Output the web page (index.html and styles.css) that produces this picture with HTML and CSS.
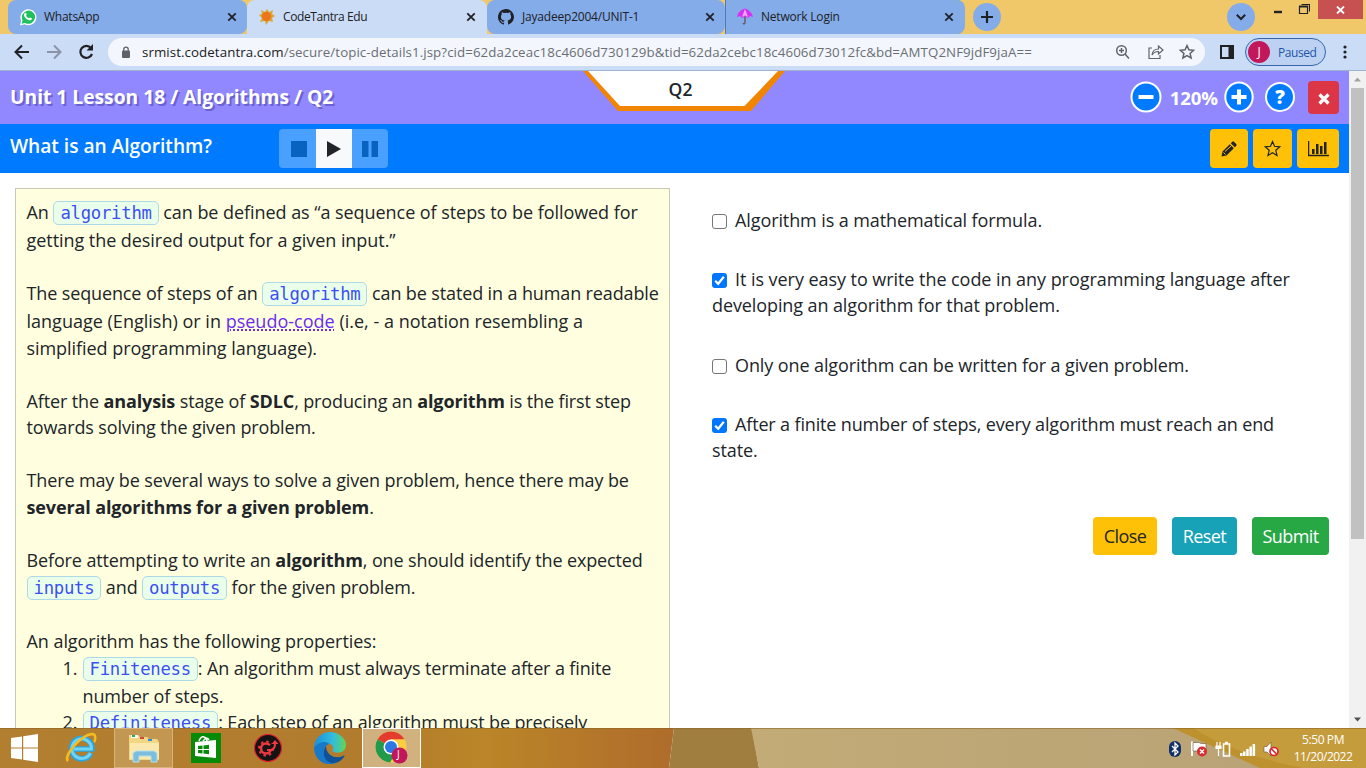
FILE: index.html
```html
<!DOCTYPE html>
<html lang="en">
<head>
<meta charset="utf-8">
<title>CodeTantra Edu</title>
<link rel="stylesheet" href="styles.css">
</head>
<body>
<div class="tabstrip">
  <div class="tab first">
    <svg class="fav" width="18" height="18" viewBox="0 0 18 18"><path d="M1 17.500l1.200-4.800A8 8 0 1 1 5.500 16.200z" fill="#fff"/><path d="M2.600 15.800l1-3.600A6.600 6.600 0 1 1 6.200 14.900z" fill="#20c05c"/><path d="M5.600 5.200c.5-.7 1.200-.6 1.500 0l.6 1.400c.1.400-.6.900-.6 1.200.6 1.200 1.600 2 2.900 2.500.4 0 .8-1 1.200-.9l1.500.8c.4.300.1 1.300-.4 1.700-2.400 1.500-7.500-2.100-7.300-5.200z" fill="#fff"/></svg>
    <span class="tt">WhatsApp</span><svg class="x" width="10" height="10" viewBox="0 0 10 10"><path d="M1.300 1.300l7.400 7.400M8.700 1.300L1.300 8.700"/></svg>
  </div>
  <div class="tab active">
    <svg class="fav" width="18" height="18" viewBox="0 0 18 18"><path d="M9 1l2 3 4-2-1 4 3 2-3 2 1 4-4-1-3 4-1-4-5 1 2-4-3-3 3-1-1-4 4 2z" fill="#d8a838"/><circle cx="8.500" cy="8.500" r="4.700" fill="#ee7518"/></svg>
    <span class="tt">CodeTantra Edu</span><svg class="x" width="10" height="10" viewBox="0 0 10 10"><path d="M1.300 1.300l7.400 7.400M8.700 1.300L1.300 8.700"/></svg>
  </div>
  <div class="tab third">
    <svg class="fav" width="16" height="16" viewBox="0 0 16 16"><path fill="#202124" d="M8 0C3.580 0 0 3.580 0 8c0 3.540 2.290 6.530 5.470 7.590.4.070.55-.17.55-.38V13.700c-2 .37-2.530-.49-2.690-.94-.09-.23-.48-.94-.82-1.130-.28-.15-.68-.52-.01-.53.63-.01 1.080.58 1.230.82.720 1.210 1.870.87 2.330.66.070-.52.280-.87.510-1.070-1.780-.2-3.640-.89-3.640-3.950 0-.87.310-1.590.82-2.150-.08-.2-.36-1.020.08-2.120 0 0 .67-.21 2.200.82a7.600 7.600 0 0 1 4 0c1.530-1.040 2.200-.82 2.200-.82.440 1.100.16 1.920.08 2.120.51.560.82 1.270.82 2.150 0 3.070-1.870 3.750-3.650 3.950.29.250.54.730.54 1.480v2.200c0 .21.150.46.550.38A8 8 0 0 0 8 0z"/></svg>
    <span class="tt">Jayadeep2004/UNIT-1</span><svg class="x" width="10" height="10" viewBox="0 0 10 10"><path d="M1.300 1.300l7.400 7.400M8.700 1.300L1.300 8.700"/></svg>
  </div>
  <div class="tab fourth">
    <svg class="fav" width="18" height="18" viewBox="0 0 18 18"><path d="M9 8v7q-1 2-2 0" fill="none" stroke="#665c66" stroke-width="1.500"/><path d="M1 9C2 4 5 2 9 .5c4 1.500 7 4 8 8.500l-3-1-2 2-3-1.500L6 10l-2-2z" fill="#d531f2"/><path d="M9 1L6 9l3-1.500L12 9z" fill="#f5a8f8"/></svg>
    <span class="tt">Network Login</span><svg class="x" width="10" height="10" viewBox="0 0 10 10"><path d="M1.300 1.300l7.400 7.400M8.700 1.300L1.300 8.700"/></svg>
  </div>
  <div class="round plus"><svg width="14" height="14" viewBox="0 0 14 14"><path d="M7 1v12M1 7h12" stroke="#202124" stroke-width="2.200"/></svg></div>
  <div class="round down"><svg width="12" height="8" viewBox="0 0 12 8"><path d="M1.800 1.800L6 6l4.200-4.200" fill="none" stroke="#202124" stroke-width="2"/></svg></div>
  <svg class="minmax" width="36" height="20" viewBox="0 0 36 20"><path d="M0 12h8" stroke="#222" stroke-width="2.400"/><path d="M25.500 6.500h8v7h-8zM27.500 4.500h8v7" fill="none" stroke="#222" stroke-width="1.200"/><path d="M25 6.500h9" stroke="#222" stroke-width="2"/></svg>
  <div class="winclose"><svg width="9" height="8" viewBox="0 0 9 8"><path d="M1 .5l7 7M8 .5l-7 7" stroke="#fff" stroke-width="1.800"/></svg></div>
</div>
<div class="toolbar">
  <svg class="nav" width="94" height="20" viewBox="0 0 94 20" fill="none" stroke-width="2"><path d="M29 10H16.500M22 3.500L15.500 10l6.500 6.500" stroke="#202124"/><path d="M47 10h12.500M54 3.500l6.500 6.500-6.500 6.500" stroke="#8a94a6"/><path d="M91 6A6 6 0 1 0 92 12" stroke="#202124" stroke-width="2.200"/><path d="M93 2v6.500h-6.500z" fill="#202124"/></svg>
  <div class="omni">
    <svg width="10" height="13" viewBox="0 0 10 13"><rect x="1" y="4.500" width="8" height="7.500" rx="1" fill="#5f6368"/><path d="M2.800 5V3.300a2.200 2.200 0 0 1 4.400 0V5" fill="none" stroke="#5f6368" stroke-width="1.300"/></svg>
    <div class="url"><b>srmist.codetantra.com</b>/secure/topic-details1.jsp?cid=62da2ceac18c4606d730129b&amp;tid=62da2cebc18c4606d73012fc&amp;bd=AMTQ2NF9jdF9jaA==</div>
    <svg width="80" height="18" viewBox="0 0 80 18" fill="none" stroke="#5f6368" stroke-width="1.500"><circle cx="6.500" cy="7.500" r="4.800"/><path d="M10 11l4 4.500M4 7.500h5M6.500 5v5"/><path d="M37 5h-3v10.500h11V12M37 12c.5-4 3-6 6.500-6V3l4.500 4-4.500 4V8.500C40.500 8.500 38.500 9.500 37 12z" stroke-width="1.200"/><path d="M72 2.500l1.900 4.300 4.700.5-3.500 3.100 1 4.600-4.100-2.400-4.100 2.400 1-4.600-3.500-3.100 4.700-.5z"/></svg>
  </div>
  <svg class="side" width="14" height="14" viewBox="0 0 14 14"><path d="M1 1h12v12H1z" fill="none" stroke="#202124" stroke-width="2"/><path d="M8.500 1H14v12H8.500z" fill="#202124"/></svg>
  <div class="paused"><i>J</i><span>Paused</span></div>
  <svg class="dots" width="4" height="14" viewBox="0 0 4 14" fill="#202124"><circle cx="2" cy="2" r="1.600"/><circle cx="2" cy="7" r="1.600"/><circle cx="2" cy="12" r="1.600"/></svg>
</div>
<div class="view">
  <main class="page">
    <header class="head">
      <h1>Unit 1 Lesson 18 / Algorithms / Q2</h1>
      <div class="badge"><svg width="202" height="40" viewBox="0 0 202 40"><path d="M0 0h202l-34 40H35z" fill="#f28500"/><path d="M5 0h190l-33.500 35H37z" fill="#fff"/></svg><span>Q2</span></div>
      <div class="zoomer">
        <svg width="32" height="32" viewBox="0 0 32 32"><circle cx="16" cy="16" r="14.500" fill="#007bff" stroke="#fff" stroke-width="2"/><path d="M8.500 16h15" stroke="#fff" stroke-width="4"/></svg>
        <span>120%</span>
        <svg class="p" width="30" height="32" viewBox="0 0 30 32"><ellipse cx="15" cy="16" rx="13.700" ry="14.500" fill="#007bff" stroke="#fff" stroke-width="2"/><path d="M7.500 16h15M15 8.500v15" stroke="#fff" stroke-width="4"/></svg>
        <div class="help">?</div>
        <div class="exit"><svg width="12" height="12" viewBox="0 0 12 12"><path d="M1.500 1.500l9 9M10.500 1.500l-9 9" stroke="#fff" stroke-width="3.200"/></svg></div>
      </div>
    </header>
    <div class="sub">
      <h2>What is an Algorithm?</h2>
      <div class="player"><div><svg width="16" height="16"><path d="M0 0h16v16H0z" fill="#0862c0"/></svg></div><div class="on"><svg width="14" height="16" viewBox="0 0 14 16"><path d="M0 0l14 8-14 8z" fill="#212529"/></svg></div><div><svg width="16" height="16"><path d="M0 0h6.500v16H0zM9.500 0H16v16H9.500z" fill="#0862c0"/></svg></div></div>
      <div class="tools">
        <div><svg width="16" height="16" viewBox="0 0 16 16"><path d="M.5 15.500l1-5L8.800 3.200l4 4L5.500 14.500zM9.800 2.200L11.300.7q.8-.7 1.700.1l2.200 2.200q.8.900.1 1.700l-1.500 1.500z" fill="#212529"/><path d="M2.500 11.500l2 2M4 10.500l6-5.500" stroke="#ffc107"/></svg></div>
        <div><svg width="17" height="17" viewBox="0 0 17 17"><path d="M8.500 1.600l2 4.700 5.300.5-4 3.500 1.200 5.200-4.500-2.700L4 15.500l1.200-5.200-4-3.500 5.300-.5z" fill="none" stroke="#212529" stroke-width="1.200"/></svg></div>
        <div class="w"><svg width="21" height="16" viewBox="0 0 21 16"><path d="M.6 0v14.500H21" fill="none" stroke="#212529" stroke-width="1.300"/><path d="M4 8h2.500v5H4zM8 3h2.500v10H8zM12 5h2.500v8H12zM16 1h2.500v12H16z" fill="#212529"/></svg></div>
      </div>
    </div>
    <div class="body">
      <section class="lesson">
        <p><span class="l c wide">An <code>algorithm</code> can be defined as “a sequence of steps to be followed for</span><span class="l wide">getting the desired output for a given input.”</span></p>
        <p><span class="l c">The sequence of steps of an <code>algorithm</code> can be stated in a human readable</span><span class="l full">language (English) or in <a>pseudo-code</a> (i.e, - a notation resembling a</span><span class="l wide">simplified programming language).</span></p>
        <p><span class="l">After the <b>analysis</b> stage of <b>SDLC</b>, producing an <b>algorithm</b> is the first step</span><span class="l">towards solving the given problem.</span></p>
        <p><span class="l">There may be several ways to solve a given problem, hence there may be</span><span class="l"><b>several algorithms for a given problem</b>.</span></p>
        <p><span class="l">Before attempting to write an <b>algorithm</b>, one should identify the expected</span><span class="l c"><code>inputs</code> and <code>outputs</code> for the given problem.</span></p>
        <p class="last"><span class="l wide">An algorithm has the following properties:</span></p>
        <ol>
          <li><span class="l">1.</span><div><span class="l c"><code>Finiteness</code>: An algorithm must always terminate after a finite</span><span class="l">number of steps.</span></div></li>
          <li><span class="l">2.</span><div><span class="l"><code>Definiteness</code>: Each step of an algorithm must be precisely</span></div></li>
        </ol>
      </section>
      <section class="quiz">
        <div class="opt"><span class="l"><i class="cb"></i>Algorithm is a mathematical formula.</span></div>
        <div class="opt"><span class="l wide"><i class="cb on"><svg width="15" height="15" viewBox="0 0 15 15"><path d="M3.200 7.800l3 3 5.600-7"/></svg></i>It is very easy to write the code in any programming language after</span><span class="l">developing an algorithm for that problem.</span></div>
        <div class="opt"><span class="l"><i class="cb"></i>Only one algorithm can be written for a given problem.</span></div>
        <div class="opt"><span class="l tight"><i class="cb on"><svg width="15" height="15" viewBox="0 0 15 15"><path d="M3.200 7.800l3 3 5.600-7"/></svg></i>After a finite number of steps, every algorithm must reach an end</span><span class="l">state.</span></div>
        <div class="btns"><div class="close">Close</div><div class="reset">Reset</div><div class="submit">Submit</div></div>
      </section>
    </div>
  </main>
  <div class="scroll"><svg width="17" height="17"><path d="M5 10.500h7L8.500 6.500z" fill="#a3a3a3"/></svg><div class="thumb"></div><svg width="17" height="17"><path d="M5 6.500h7l-3.500 4z" fill="#505050"/></svg></div>
</div>
<footer class="taskbar">
  <svg class="wall" width="1366" height="40" preserveAspectRatio="none">
    <defs><linearGradient id="g1"><stop offset="0" stop-color="#b27e30"/><stop offset=".55" stop-color="#b27c2e"/><stop offset=".72" stop-color="#bb8528"/><stop offset="1" stop-color="#af6c2b"/></linearGradient><linearGradient id="g2"><stop offset="0" stop-color="#c2ab76"/><stop offset="1" stop-color="#b9a276"/></linearGradient></defs>
    <path d="M0 0h674l-5 40H0z" fill="url(#g1)"/><path d="M674 0h78l7 40h-90z" fill="#a07e3f"/><path d="M751 0h430l110 40H759z" fill="url(#g2)"/><path d="M1173 0h193v40h-106z" fill="#c59c3c"/><path d="M1173 0h20q40 26 110 40h-43z" fill="#bd912e"/><path d="M0 .5h1366" stroke="#8c6828" stroke-opacity=".6"/>
  </svg>
  <div class="apps">
    <div class="app a1"><svg width="28" height="28" viewBox="0 0 28 28" fill="#fff"><path d="M0 4l11-1.500v11H0zM12.200 2.300L27 0v13.500H12.200zM0 14.500h11v11L0 24zM12.200 14.500H27V28l-14.800-2.300z"/></svg></div>
    <div class="app a2"><svg width="32" height="32" viewBox="0 0 32 32" fill="none"><path d="M26 21a10.300 10.300 0 1 1 1-4H9" stroke="#2aa5e0" stroke-width="5.500"/><path d="M25.500 21a9.800 9.800 0 1 1 1-4H9" stroke="#70d5f5" stroke-width="3"/><path d="M3 29C-2 24 16 3 27 2c5 0 3 7 2 8" stroke="#f3bd20" stroke-width="2.500"/></svg></div>
    <div class="app a3 open"><svg width="32" height="30" viewBox="0 0 32 30"><path d="M1 6V2h9l2 2h7l2 2h8l2 3v18H1z" fill="#f1d782"/><path d="M3 2h7v3H3z" fill="#fff"/><path d="M4 2h3v2H4z" fill="#2aa84a"/><path d="M12 4h4v2h-4z" fill="#db4437"/><path d="M20 6h4v2h-4z" fill="#2c8de0"/><path d="M2 10h29v16H2z" fill="#f9e9ae"/><path d="M5 29V20l3-2h18l3 2v9h-6v-6H11v6z" fill="#7bbddb" stroke="#b4e0f0"/></svg></div>
    <div class="app a4"><svg width="30" height="30" viewBox="0 0 30 30"><path d="M0 0h30v30H0z" fill="#078a07"/><path d="M4 9l21-2v18L4 23z" fill="#fff"/><path d="M8 8q2-5 5-4t3 4M12 8q4-5 6-1" fill="none" stroke="#fff" stroke-width="1.500"/><path d="M7 13l4.500-.5V16H7zM12.500 12.400l5.500-.6V16h-5.500zM7 17h4.500v3.500L7 20zM12.500 17H18v4.200l-5.500-.6z" fill="#078a07"/></svg></div>
    <div class="app a5"><svg width="30" height="30" viewBox="0 0 30 30"><circle cx="15" cy="15" r="13.500" fill="#141414" stroke="#e02030" stroke-width="1.200"/><circle cx="13" cy="15.500" r="5" fill="none" stroke="#f03840" stroke-width="2.500"/><circle cx="13" cy="15.500" r="7" fill="none" stroke="#f03840" stroke-width="2" stroke-dasharray="2.500 3"/><path d="M13 15h4l4-4" fill="none" stroke="#141414" stroke-width="4"/><path d="M14 16h3c3 0 4-3 4-5h-2.500L22 7l3.500 4H23c0 4-2 7-6 7h-3z" fill="#f03840"/></svg></div>
    <div class="app a6"><svg width="32" height="32" viewBox="0 0 32 32"><defs><linearGradient id="e" x2="1"><stop stop-color="#1d8ed8"/><stop offset=".6" stop-color="#31bddd"/><stop offset="1" stop-color="#64d653"/></linearGradient></defs><path d="M0 16C0 6 8 0 16 0s16 6 16 13-7 9-12 7c-3-1 0-2-1-5-2-5-10-6-19 1z" fill="url(#e)"/><path d="M0 16c5-7 13-7 15-4-5 2-7 8-3 13 4 5 11 3 17 0-4 6-10 8-16 7C5 31 0 23 0 16z" fill="#1878ca"/><path d="M12 14c-5 7-1 17 7 17 5 0 9-3 11-6 1-2 0-2-1-1-9 4-17-2-17-10z" fill="#0f5298"/></svg></div>
    <div class="app a7 open cur"><svg width="34" height="34" viewBox="0 0 34 34"><circle cx="16" cy="16" r="15.500" fill="#ffcd40"/><path d="M16 16L2.600 8.200A15.500 15.500 0 0 1 29.400 8.200H16z" fill="#e33b2e"/><path d="M16 16L2.600 8.200A15.500 15.500 0 0 0 15 31.500L22.500 19z" fill="#229a4c"/><circle cx="16" cy="16" r="7.500" fill="#fff"/><circle cx="16" cy="16" r="6" fill="#2b78e4"/><circle cx="24.500" cy="24.500" r="8" fill="#c2185b"/></svg><em>J</em></div>
  </div>
  <svg class="tray" width="112" height="20" viewBox="0 0 112 20"><rect x="1" y="2" width="12" height="16" rx="6" fill="#102f69"/><path d="M4 7l6 6-3 3V4l3 3-6 6" fill="none" stroke="#fff" stroke-width="1.300"/><path d="M24 2.500v14.500" stroke="#fff" stroke-width="2"/><path d="M25 3.500h6l2 1h5V12H25z" fill="#fff" stroke="#6a5632" stroke-width=".6"/><circle cx="34" cy="12.500" r="5" fill="#d92c30"/><path d="M32 10.500l4 4M36 10.500l-4 4" stroke="#fff" stroke-width="1.400"/><path d="M49 3v4M52 3v4M48 7h5v2.500h-5zM50.500 9v8" fill="#fff" stroke="#fff" stroke-width="1.200"/><path d="M55.500 5h6v12h-6zM57 3.500h3" fill="none" stroke="#fff" stroke-width="1.600"/><path d="M72 14h2.500v3H72zM75 12.500h2.500V17H75zM78.200 10h2.500v7h-2.500zM81.400 7.500h2.500V17h-2.500zM84.600 5h2.500v12h-2.500z" fill="#fff"/><path d="M96 7.500h3l4-4.500v14l-4-4h-3z" fill="#fff" stroke="#6a5632" stroke-width=".6"/><circle cx="106" cy="12.500" r="4" fill="#fff" stroke="#d9262c" stroke-width="1.700"/><path d="M103.500 10l5 5" stroke="#d9262c" stroke-width="1.700"/></svg>
  <div class="clock"><span>5:50 PM</span><span class="date">11/20/2022</span></div>
</footer>
</body>
</html>
```
FILE: styles.css
```css
* { box-sizing: border-box; }
body { margin: 0; width: 1366px; height: 768px; overflow: hidden; display: flex; flex-direction: column; font-family: "Open Sans", "Noto Sans", sans-serif; color: #212529; background: #fff; }
svg { display: block; flex: none; }
.tabstrip { height: 34px; flex: none; display: flex; background: #f0c869; padding-left: 8px; }
.tab { height: 34px; display: flex; align-items: center; flex: none; background: #84ace9; border-radius: 8px; width: 239px; font-size: 12px; color: #202124; padding-right: 10px; }
.tab .tt { flex: 1; margin-left: 7px; white-space: nowrap; letter-spacing: -.2px; line-height: 16px; padding-bottom: 1px; }
.x { stroke: #202124; stroke-width: 1.8; }
.first { padding-left: 11px; }
.active { background: #cbdcf6; width: 240px; border-radius: 8px 8px 0 0; padding-left: 11px; padding-right: 11px; }
.active .tt { letter-spacing: -.4px; }
.first .tt { letter-spacing: -.25px; }
.third { padding-left: 11px; width: 238px; }
.third .tt { margin-left: 8px; }
.fourth { padding-left: 10px; padding-right: 11px; margin-left: 1px; border-radius: 0 8px 8px 0; box-shadow: -1px 0 #5278b0; }
.round { width: 28px; height: 28px; border-radius: 50%; background: #84ace9; display: flex; align-items: center; justify-content: center; margin: 3px 0 0 8px; }
.plus { flex: none; }
.down { margin-left: 226px; flex: none; }
.minmax { margin: 0 0 0 19px; }
.winclose { width: 45px; height: 19px; margin-left: 8px; background: #c75050; display: flex; align-items: center; justify-content: center; flex: none; }
.toolbar { height: 37px; flex: none; background: #cbdcf6; border-bottom: 1px solid #9fb3cf; display: flex; align-items: center; }
.nav { margin-right: 14px; }
.omni { width: 1097px; height: 28px; border-radius: 14px; background: #f3f7fd; display: flex; align-items: center; padding: 0 10px 0 13px; }
.url { flex: 1; margin-left: 11px; font-size: 13.300px; letter-spacing: .08px; white-space: nowrap; color: #6a6e73; }
.url b { font-weight: 400; color: #202124; }
.side { margin-left: 15px; }
.paused { width: 81px; height: 28px; margin-left: 11px; border: 1px solid #3665ad; border-radius: 14px; background: #bdd2f3; display: flex; align-items: center; font-size: 12px; color: #2255a5; letter-spacing: -.45px; }
.paused i { width: 22px; height: 22px; border-radius: 50%; background: #c2185b; color: #fff; font-style: normal; text-align: center; line-height: 22px; margin: 0 8px 0 2px; }
.dots { margin-left: 17px; }
.view { height: 657px; flex: none; display: flex; overflow: hidden; }
.page { width: 1349px; flex: none; }
.head { height: 53px; background: #9188ff; display: flex; position: relative; align-items: center; justify-content: space-between; padding: 0 10px; }
h1 { margin: 0 0 2px; font-size: 19.300px; font-weight: 700; color: #fff; text-shadow: 2px 2px #6b62d0; white-space: nowrap; letter-spacing: -.03px; }
.badge { position: absolute; left: 583px; top: 0; }
.badge span { position: absolute; inset: 5px 0 auto; width: 195px; text-align: center; font-weight: 600; font-size: 17.500px; line-height: 26px; }
.zoomer { display: flex; align-items: center; color: #fff; }
.zoomer > svg, .help { margin-bottom: 2px; }
.zoomer span { font-weight: 700; font-size: 18.600px; margin: 0 6px 0 8px; letter-spacing: -.1px; }
.help { width: 30px; height: 30px; border: 2px solid #fff; border-radius: 50%; background: #007bff; font-weight: 800; font-size: 19px; text-align: center; line-height: 26px; margin-left: 11px; margin-right: 13px; }
.exit { width: 31px; height: 33px; border-radius: 4px; background: #dc3545; display: flex; align-items: center; justify-content: center; padding-top: 3px; }
.sub { height: 49px; background: #007bff; display: flex; align-items: center; padding: 0 10px; }
h2 { margin: 0 0 6px; font-size: 19.200px; font-weight: 600; color: #fff; width: 269px; letter-spacing: -.04px; }
.player { display: flex; height: 39px; width: 109px; border-radius: 4px; overflow: hidden; background: #4aa0ff; }
.player div { flex: 1; display: flex; align-items: center; justify-content: center; }
.player div:first-child { flex: none; width: 37px; padding-left: 2px; }
.player .on { background: #f8f9fa; }
.tools { display: flex; gap: 5px; margin-left: auto; }
.tools div { width: 38px; height: 39px; border-radius: 4px; background: #ffc107; display: flex; align-items: center; justify-content: center; }
.tools div + div { width: 39px; }
.tools div.w { width: 42px; }
.body { display: flex; padding: 15px 0 0 15px; }
.lesson { width: 655px; height: 570px; border: 1px solid #c9c9b8; background: #ffffdf; padding: 10px 0 0 10.500px; font-size: 18px; letter-spacing: -.125px; }
.l { display: block; height: 26.700px; line-height: 26.700px; white-space: nowrap; }
.l.c { height: 27.900px; }
.l.wide { letter-spacing: -.055px; }
.l.full { letter-spacing: .01px; }
.l.tight { letter-spacing: -.15px; }
p { margin: 0 0 26.400px; }
p.last { margin: 0; }
code { font: 17.300px/22px "DejaVu Sans Mono", monospace; letter-spacing: -.27px; color: #3b4ff5; background: #eaffea; border: 1px solid #add8e6; border-radius: 5px; padding: 0 6px; display: inline-block; height: 24px; vertical-align: 0; margin-bottom: -2px; }
a { color: #6a2cf0; text-decoration: underline dotted; text-underline-offset: 2px; }
b { font-weight: 700; }
ol { list-style: none; margin: 0; padding: 0; }
li { display: flex; padding-left: 36px; }
li > .l { width: 20px; }
.quiz { width: 617px; margin-left: 42px; padding-top: 19px; font-size: 18px; letter-spacing: -.1px; }
.quiz .l { height: 26.200px; line-height: 26.300px; }
.opt { margin-bottom: 33.100px; }
.cb { display: inline-block; width: 15px; height: 15px; border: 1px solid #767676; border-radius: 3px; background: #fff; margin-right: 8px; vertical-align: -2px; }
.cb.on { border: 0; background: #0075ff; }
.cb path { fill: none; stroke: #fff; stroke-width: 2.2; }
.btns { display: flex; gap: 15px; justify-content: flex-end; margin-top: 54px; line-height: 38px; color: #fff; text-align: center; letter-spacing: -.6px; }
.btns div { height: 38px; width: 65px; border-radius: 4px; background: #17a2b8; }
.btns .close { background: #ffc107; width: 64px; color: #212529; }
.btns .submit { background: #28a745; width: 77px; }
.scroll { width: 17px; background: #f1f1f1; display: flex; flex-direction: column; }
.thumb { width: 13px; height: 451px; background: #c1c1c1; margin: 0 2px auto; }
.taskbar { height: 40px; flex: none; display: flex; align-items: center; position: relative; color: #fff; }
.wall { position: absolute; inset: 0; }
.apps { display: flex; position: relative; height: 40px; align-items: center; }
.app { display: flex; align-items: center; justify-content: center; height: 40px; width: 59px; }
.a1 { width: 50px; padding-right: 1px; }
.a2 { width: 64px; padding-right: 3px; }
.a4 { width: 65px; }
.a5 { width: 59px; }
.a6 { width: 65px; }
.open { border: 1px solid #d4b47c; background: rgba(225, 200, 150, .35); }
.cur { border-color: #fff; background: rgba(225, 205, 170, .65); position: relative; }
.cur em { position: absolute; left: 34px; top: 17px; font: 10px/16px "Open Sans", sans-serif; }
.tray { position: relative; margin: 2px 0 0 auto; }
.clock { position: relative; display: flex; flex-direction: column; align-items: center; width: 86px; font-size: 12px; line-height: 17px; letter-spacing: -.4px; }
.date { letter-spacing: -.5px; }
```
